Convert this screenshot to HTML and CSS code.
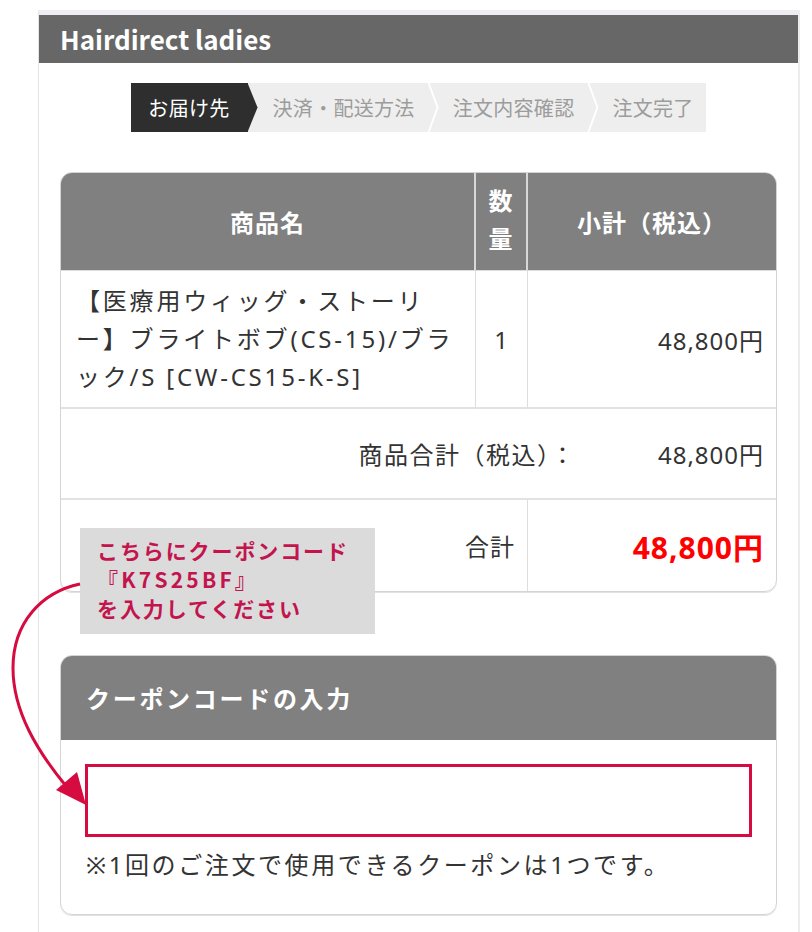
FILE: index.html
```html
<!DOCTYPE html>
<html lang="ja">
<head>
<meta charset="utf-8">
<title>Hairdirect ladies</title>
<link rel="stylesheet" href="styles.css">
</head>
<body>
<div class="screen">
  <div class="page">
    <header class="site-header">Hairdirect ladies</header>
    <main class="content">
      <ol class="steps">
        <li class="step is-active">お届け先</li>
        <li class="step">決済・配送方法</li>
        <li class="step">注文内容確認</li>
        <li class="step">注文完了</li>
      </ol>

      <div class="cart">
        <div class="cart-box">
          <table class="cart-table">
            <colgroup>
              <col class="col-name">
              <col class="col-qty">
              <col class="col-sub">
            </colgroup>
            <thead>
              <tr>
                <th>商品名</th>
                <th class="th-qty">数<br>量</th>
                <th>小計（税込）</th>
              </tr>
            </thead>
            <tbody>
              <tr class="row-item">
                <td class="td-name">【医療用ウィッグ・ストーリ<br>ー】ブライトボブ(CS-15)/ブラ<br>ック/S [CW-CS15-K-S]</td>
                <td class="td-qty">1</td>
                <td class="td-price">48,800円</td>
              </tr>
              <tr class="row-sum">
                <td colspan="3">
                  <div class="sum">
                    <span class="sum-label">商品合計（税込）：</span>
                    <span class="sum-value">48,800円</span>
                  </div>
                </td>
              </tr>
              <tr class="row-total">
                <td colspan="2" class="td-total-label">合計</td>
                <td class="td-total">48,800円</td>
              </tr>
            </tbody>
          </table>
        </div>
        <div class="callout">こちらにクーポンコード<br><span class="code">『K7S25BF』</span><br>を入力してください</div>
      </div>

      <section class="coupon">
        <h2 class="coupon-head">クーポンコードの入力</h2>
        <div class="coupon-body">
          <input class="coupon-input" type="text" aria-label="クーポンコード">
          <p class="coupon-note">※1回のご注文で使用できるクーポンは1つです。</p>
        </div>
      </section>
    </main>
  </div>

  <svg class="arrow" width="812" height="932" viewBox="0 0 812 932" aria-hidden="true">
    <path d="M80 584 C42 592 13 622 13 668 C13 712 38 752 66 786" fill="none" stroke="#d60b40" stroke-width="3"/>
    <polygon points="56,790 77,772 86,805" fill="#d60b40"/>
  </svg>
</div>
</body>
</html>
```
FILE: styles.css
```css
* { box-sizing: border-box; }

body {
  margin: 0;
  background: #fff;
  color: #333;
  font-family: "Noto Sans", "Noto Sans CJK JP", sans-serif;
}

.screen {
  position: relative;
  width: 812px;
  height: 932px;
  overflow: hidden;
}

.page {
  margin: 10px 0 0 38px;
  width: 762px;
  min-height: 922px;
  border-top: 5px solid #ededf3;
  border-left: 1px solid #e4e4e4;
  border-right: 2px solid #ececec;
}

.site-header {
  height: 48px;
  padding-left: 21px;
  background: #676767;
  color: #fff;
  font-family: "Noto Sans CJK JP", sans-serif;
  font-weight: 700;
  font-size: 26px;
  line-height: 48px;
}

.content {
  padding: 20px 21px 0 21px;
}

/* steps */
.steps {
  display: flex;
  width: max-content;
  margin: 0 auto;
  padding: 0;
  list-style: none;
  background: #eeeeee;
  height: 49px;
}

.step {
  position: relative;
  padding: 0 13px 0 25px;
  font-family: "Noto Sans CJK JP", sans-serif;
  font-size: 20px;
  letter-spacing: 0.3px;
  line-height: 49px;
  color: #9c9c9c;
}

.step::after {
  content: "";
  position: absolute;
  top: 0;
  left: 100%;
  width: 11px;
  height: 100%;
  background: #fff;
  clip-path: polygon(0 0, 2px 0, 100% 50%, 2px 100%, 0 100%, calc(100% - 2px) 50%);
  z-index: 1;
}

.step:last-child::after { display: none; }
.step:last-child { padding-right: 12px; }

.step.is-active {
  padding: 0 18px 0 17px;
  background: #2e2e2e;
  color: #fff;
}

.step.is-active::after {
  width: 10px;
  background: #2e2e2e;
  clip-path: polygon(0 0, 100% 50%, 0 100%);
}

/* cart */
.cart {
  position: relative;
  margin-top: 40px;
}

.cart-box {
  border: 1px solid #d4d4d4;
  border-radius: 12px;
  overflow: hidden;
  box-shadow: 0 1px 0 #e2e2e2;
}

.cart-table {
  width: 100%;
  border-collapse: separate;
  border-spacing: 0;
  table-layout: fixed;
  font-size: 24px;
}

.col-name { width: 415px; }
.col-qty { width: 52px; }

.cart-table th {
  height: 98px;
  padding: 0;
  background: #808080;
  color: #fff;
  font-family: "Noto Sans CJK JP", sans-serif;
  font-weight: 700;
  font-size: 24px;
  letter-spacing: 1px;
  line-height: 38px;
  border-right: 2px solid #d8d8d8;
  border-bottom: 1px solid #dddddd;
}

.cart-table th.th-qty { padding-bottom: 6px; }
.cart-table th:last-child { border-right: 0; }

.cart-table td {
  padding: 0 12px 0 14px;
  border-right: 1px solid #dddddd;
  border-bottom: 2px solid #e2e2e2;
  letter-spacing: 1px;
}

.cart-table td:last-child { border-right: 0; }
.cart-table tr:last-child td { border-bottom: 0; }

.row-item td { height: 138px; }
.row-sum td { height: 91px; }
.row-total td { height: 91px; }

.cart-table td.td-name {
  padding-left: 15px;
  line-height: 38px;
  letter-spacing: 2.8px;
}

.cart-table td.td-qty { text-align: center; padding: 0; }
.td-price { text-align: right; }

.sum {
  display: flex;
  justify-content: flex-end;
  align-items: center;
}

.sum-label { letter-spacing: 1.5px; }

.sum-value {
  width: 188px;
  text-align: right;
}

.cart-table td.td-total-label { text-align: right; padding-right: 12px; }

.td-total {
  text-align: right;
  color: #ff0000;
  font-weight: 700;
  font-size: 30px;
  letter-spacing: 0.5px;
}

/* callout */
.callout {
  position: absolute;
  left: 20px;
  top: 356px;
  width: 295px;
  height: 106px;
  padding: 8px 0 0 17px;
  background: #dbdbdb;
  color: #c3144d;
  font-family: "Noto Sans CJK JP", sans-serif;
  font-weight: 700;
  font-size: 21px;
  line-height: 29px;
  letter-spacing: 1.9px;
}

.callout .code { letter-spacing: 3.2px; }

/* coupon */
.coupon {
  margin-top: 63px;
  border: 1px solid #d4d4d4;
  border-radius: 12px;
  overflow: hidden;
  box-shadow: 0 1px 0 #e2e2e2;
}

.coupon-head {
  margin: 0;
  height: 84px;
  padding-left: 25px;
  background: #808080;
  color: #fff;
  font-family: "Noto Sans CJK JP", sans-serif;
  font-weight: 700;
  font-size: 24px;
  letter-spacing: 2.7px;
  line-height: 84px;
}

.coupon-body {
  padding: 24px 24px 33px 24px;
}

.coupon-input {
  display: block;
  width: 100%;
  height: 73px;
  margin: 0;
  border: 3px solid #d50b41;
  background: #fff;
  font-size: 24px;
  outline: none;
}

.coupon-note {
  margin: 12px 0 0 1px;
  font-size: 24px;
  line-height: 32px;
  letter-spacing: 2.6px;
}

/* arrow overlay */
.arrow {
  position: absolute;
  left: 0;
  top: 0;
  pointer-events: none;
}
```
